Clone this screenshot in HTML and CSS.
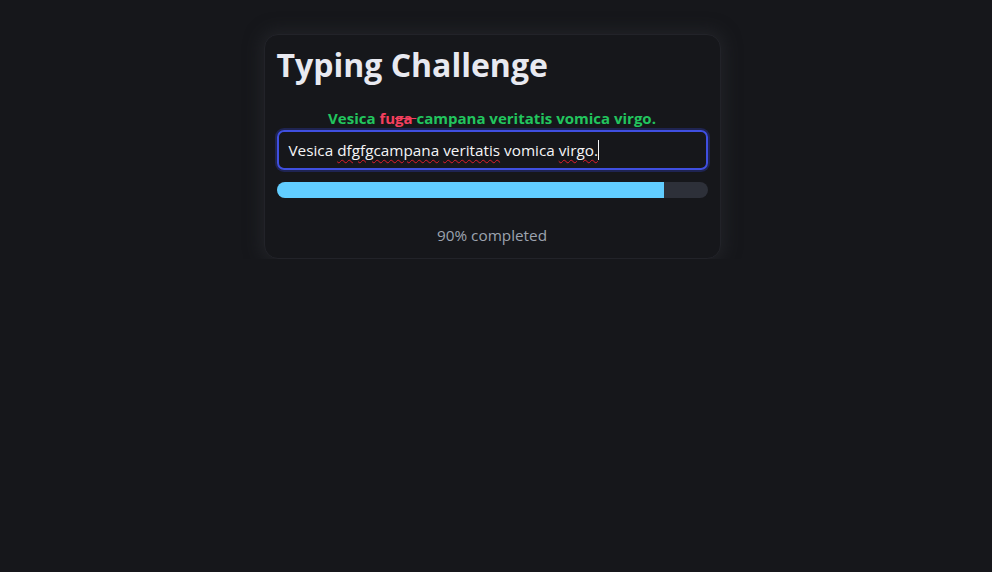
FILE: index.html
```html
<!DOCTYPE html>
<html lang="en">
<head>
<meta charset="utf-8">
<title>Typing Challenge</title>
<link rel="stylesheet" href="styles.css">
</head>
<body>
<div class="page">
  <div class="card">
    <h1 class="title">Typing Challenge</h1>
    <p class="quote"><span class="ok">Vesica </span><span class="bad">fu</span><span class="bad strike">ga </span><span class="ok">campana veritatis vomica virgo.</span></p>
    <div class="field"><span>Vesica </span><span class="spell">dfgfgcampana</span><span> </span><span class="spell">veritatis</span><span> vomica </span><span class="spell">virgo.</span><span class="caret"></span></div>
    <div class="track"><div class="fill" style="width:90%"></div></div>
    <p class="status">90% completed</p>
  </div>
</div>
</body>
</html>
```
FILE: styles.css
```css
html, body {
  margin: 0;
  padding: 0;
  background: #16171b;
}
body {
  font-family: "Open Sans", "Noto Sans", sans-serif;
  color: #e5e7eb;
}
.page {
  display: flex;
  justify-content: center;
  padding: 34px 8px 0 0;
}
.card {
  width: 431px;
  padding: 12px 12px 11px 12px;
  background: #16171b;
  border: 1px solid #222329;
  border-radius: 14px;
  box-shadow: 0 0 16px 4px rgba(40, 41, 46, 0.6);
}
.title {
  margin: 0;
  font-size: 32px;
  font-weight: 700;
  line-height: 36px;
  color: #e8e9f0;
}
.quote {
  margin: 23px 0 0;
  text-align: center;
  font-size: 15px;
  font-weight: 700;
  line-height: 24px;
}
.ok { color: #22c55e; }
.bad { color: #f43f5e; }
.strike { text-decoration: line-through; text-decoration-color: #f43f5e; }
.field {
  display: flex;
  align-items: center;
  height: 36px;
  padding: 0 10px;
  border: 2px solid #3f4fe0;
  border-radius: 7px;
  box-shadow: 0 0 0 2px #1f2452;
  font-size: 15.3px;
  color: #f5f5f7;
  white-space: pre;
}
.spell {
  text-decoration: underline wavy #e11d2d;
  text-decoration-thickness: 1px;
  text-underline-offset: 3px;
}
.caret {
  display: inline-block;
  width: 1px;
  height: 20px;
  background: #f5f5f7;
}
.track {
  margin-top: 12px;
  height: 16px;
  background: #2d3039;
  border-radius: 8px;
  overflow: hidden;
}
.fill {
  height: 100%;
  background: #61cdff;
}
.status {
  margin: 25px 0 0;
  text-align: center;
  font-size: 15.3px;
  line-height: 24px;
  color: #9ca3af;
}
```
